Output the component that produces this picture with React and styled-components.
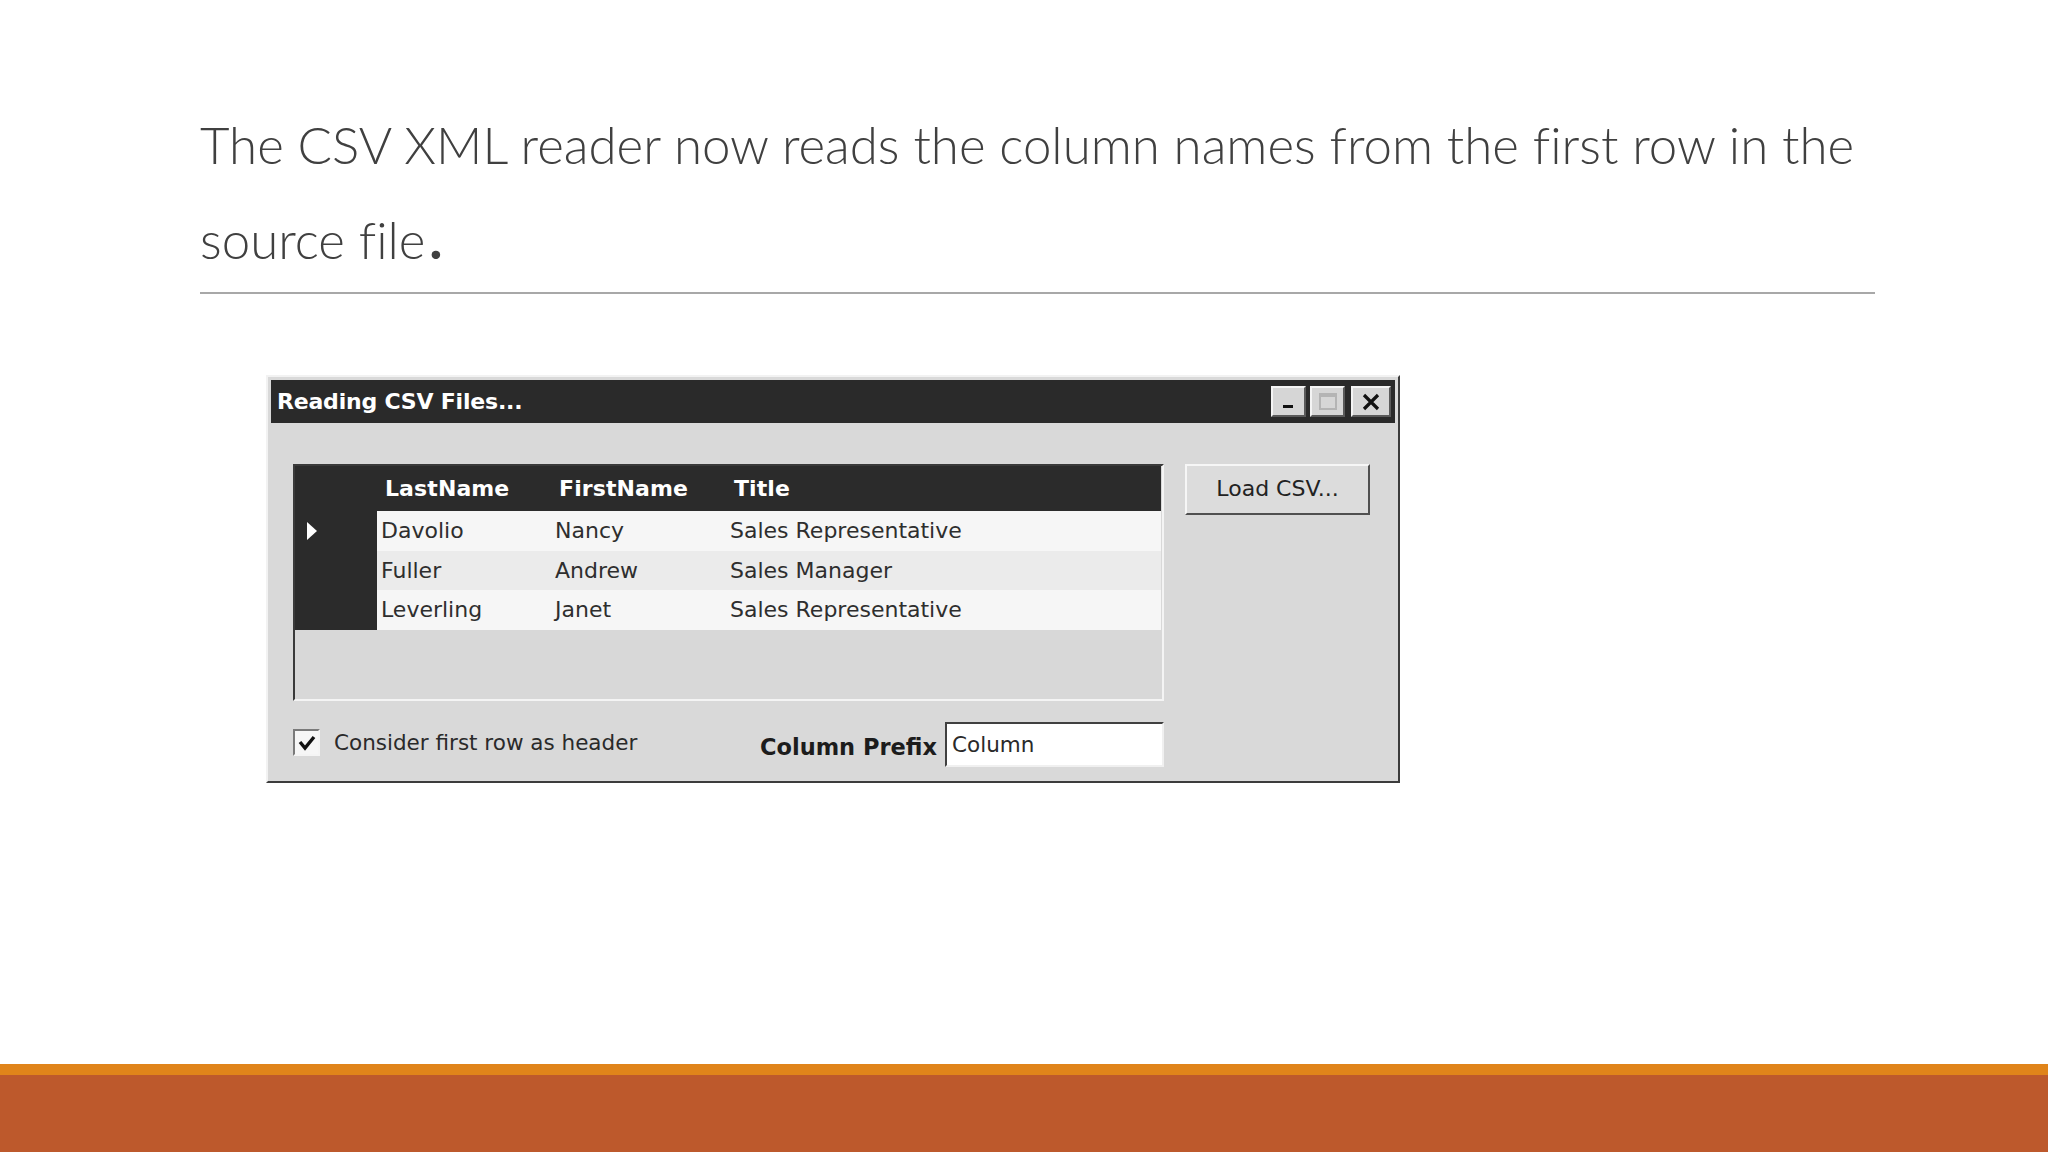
import React from "react";
import styled, { createGlobalStyle } from "styled-components";

const GlobalStyle = createGlobalStyle`
  html, body {
    margin: 0;
    padding: 0;
    background: #ffffff;
  }
  body {
    width: 2048px;
    height: 1152px;
    overflow: hidden;
  }
`;

const Slide = styled.div`
  width: 2048px;
  height: 1152px;
  display: flex;
  flex-direction: column;
  background: #ffffff;
`;

const Content = styled.div`
  flex: 1;
  padding: 98px 0 0 200px;
`;

const Heading = styled.p`
  margin: 0;
  width: 1680px;
  font-family: "Lato", "Open Sans", sans-serif;
  font-weight: 300;
  font-size: 51px;
  line-height: 93px;
  color: #404040;
  font-variant-ligatures: none;
`;

const Dot = styled.span`
  font-weight: 700;
  font-size: 56px;
  margin-left: 4px;
`;

const Rule = styled.hr`
  margin: 6px 0 0 0;
  width: 1675px;
  border: 0;
  height: 2px;
  background: #a8a8a8;
`;

const Footer = styled.div`
  display: flex;
  flex-direction: column;
`;

const Stripe = styled.div`
  height: ${({ $h }) => $h}px;
  background: ${({ $c }) => $c};
`;

/* ---------- classic dialog ---------- */

const Window = styled.div`
  margin: 81px 0 0 66px;
  width: 1134px;
  height: 408px;
  box-sizing: border-box;
  background: #d9d9d9;
  border: 2px solid;
  border-color: #f2f2f2 #3c3c3c #3c3c3c #f2f2f2;
  padding: 3px;
  display: flex;
  flex-direction: column;
  font-family: "DejaVu Sans", "Liberation Sans", sans-serif;
  font-size: 22px;
  color: #262626;
`;

const TitleBar = styled.div`
  height: 43px;
  flex: none;
  background: #2a2a2a;
  display: flex;
  align-items: center;
  padding: 0 4px 0 6px;
`;

const TitleText = styled.div`
  flex: 1;
  color: #ffffff;
  font-weight: 700;
  font-size: 22px;
  letter-spacing: -0.2px;
`;

const TitleButtons = styled.div`
  display: flex;
  gap: 4px;
`;

const CaptionButton = styled.div`
  width: ${({ $wide }) => ($wide ? 40 : 35)}px;
  height: 31px;
  box-sizing: border-box;
  background: #d6d6d6;
  border: 2px solid;
  border-color: #f4f4f4 #5a5a5a #5a5a5a #f4f4f4;
  display: flex;
  align-items: center;
  justify-content: center;
  margin-left: ${({ $gap }) => $gap || 0}px;
`;

const Body = styled.div`
  flex: 1;
  display: grid;
  grid-template-columns: 871px 185px;
  column-gap: 21px;
  padding: 41px 25px 0 22px;
`;

const LeftColumn = styled.div`
  display: flex;
  flex-direction: column;
`;

const Grid = styled.div`
  height: 237px;
  box-sizing: border-box;
  background: #d8d8d8;
  border: 2px solid;
  border-color: #3a3a3a #f4f4f4 #f4f4f4 #3a3a3a;
  display: flex;
  flex-direction: column;
`;

const Row = styled.div`
  display: grid;
  grid-template-columns: 82px 174px 175px 1fr;
  height: ${({ $header }) => ($header ? 45 : 39.5)}px;
  background: ${({ $header, $shade }) =>
    $header ? "#2b2b2b" : $shade ? "#ebebeb" : "#f6f6f6"};
  margin-right: 1px;
`;

const RowHead = styled.div`
  background: #2b2b2b;
  display: flex;
  align-items: center;
  padding-left: 12px;
`;

const Cell = styled.div`
  display: flex;
  align-items: center;
  padding-left: ${({ $header }) => ($header ? 8 : 4)}px;
  color: ${({ $header }) => ($header ? "#ffffff" : "#2e2e2e")};
  font-weight: ${({ $header }) => ($header ? 700 : 400)};
  letter-spacing: ${({ $header }) => ($header ? "0.1px" : "0")};
  white-space: nowrap;
`;

const Triangle = styled.div`
  width: 0;
  height: 0;
  border-top: 9px solid transparent;
  border-bottom: 9px solid transparent;
  border-left: 10px solid #ffffff;
`;

const BottomRow = styled.div`
  margin-top: 21px;
  height: 45px;
  display: flex;
  align-items: center;
`;

const CheckLabel = styled.label`
  display: flex;
  align-items: center;
  gap: 14px;
  flex: 1;
  color: #2a2a2a;
  font-size: 21.5px;
  padding-bottom: 4px;
`;

const CheckBox = styled.span`
  width: 27px;
  height: 27px;
  box-sizing: border-box;
  background: #f6f6f6;
  border: 2px solid;
  border-color: #7a7a7a #f4f4f4 #f4f4f4 #7a7a7a;
  display: flex;
  align-items: center;
  justify-content: center;
`;

const PrefixLabel = styled.span`
  font-weight: 700;
  font-size: 22.5px;
  color: #1c1c1c;
  margin-right: 8px;
  padding-top: 4px;
`;

const TextBox = styled.div`
  width: 219px;
  height: 45px;
  box-sizing: border-box;
  background: #ffffff;
  border: 2px solid;
  border-color: #404040 #f0f0f0 #f0f0f0 #404040;
  display: flex;
  align-items: center;
  padding-left: 5px;
  color: #2a2a2a;
  font-size: 21.5px;
`;

const LoadButton = styled.button`
  width: 185px;
  height: 51px;
  box-sizing: border-box;
  background: #dcdcdc;
  border: 2px solid;
  border-color: #f6f6f6 #505050 #505050 #f6f6f6;
  font-family: "DejaVu Sans", "Liberation Sans", sans-serif;
  font-size: 22px;
  color: #222222;
  padding: 0 0 2px 0;
`;

const rows = [
  { last: "Davolio", first: "Nancy", title: "Sales Representative", current: true },
  { last: "Fuller", first: "Andrew", title: "Sales Manager" },
  { last: "Leverling", first: "Janet", title: "Sales Representative" },
];

const DataGrid = () => (
  <Grid>
    <Row $header>
      <RowHead />
      <Cell $header>LastName</Cell>
      <Cell $header>FirstName</Cell>
      <Cell $header>Title</Cell>
    </Row>
    {rows.map((r, i) => (
      <Row key={r.last} $shade={i % 2 === 1}>
        <RowHead>{r.current && <Triangle />}</RowHead>
        <Cell>{r.last}</Cell>
        <Cell>{r.first}</Cell>
        <Cell>{r.title}</Cell>
      </Row>
    ))}
  </Grid>
);

const CsvDialog = () => (
  <Window>
    <TitleBar>
      <TitleText>Reading CSV Files...</TitleText>
      <TitleButtons>
        <CaptionButton>
          <svg width="16" height="16" viewBox="0 0 16 16">
            <rect x="2" y="11" width="10" height="3" fill="#111" />
          </svg>
        </CaptionButton>
        <CaptionButton>
          <svg width="22" height="20" viewBox="0 0 22 20">
            <rect x="3" y="2" width="16" height="15" fill="none" stroke="#b4b4b4" strokeWidth="2" />
            <rect x="3" y="2" width="16" height="3" fill="#b4b4b4" />
          </svg>
        </CaptionButton>
        <CaptionButton $wide $gap={2}>
          <svg width="20" height="18" viewBox="0 0 20 18">
            <path d="M3 2 L17 16 M17 2 L3 16" stroke="#111" strokeWidth="3.2" />
          </svg>
        </CaptionButton>
      </TitleButtons>
    </TitleBar>
    <Body>
      <LeftColumn>
        <DataGrid />
        <BottomRow>
          <CheckLabel>
            <CheckBox>
              <svg width="18" height="16" viewBox="0 0 18 16">
                <path d="M2 7 L7 13 L16 2" fill="none" stroke="#111" strokeWidth="3.4" />
              </svg>
            </CheckBox>
            Consider first row as header
          </CheckLabel>
          <PrefixLabel>Column Prefix</PrefixLabel>
          <TextBox>Column</TextBox>
        </BottomRow>
      </LeftColumn>
      <div>
        <LoadButton>Load CSV...</LoadButton>
      </div>
    </Body>
  </Window>
);

export default function App() {
  return (
    <>
      <GlobalStyle />
      <Slide>
        <Content>
          <Heading>
            The CSV XML reader now reads the column names from the first row in the
            <br />
            source file<Dot>.</Dot>
          </Heading>
          <Rule />
          <CsvDialog />
        </Content>
        <Footer>
          <Stripe $h={11} $c="#e0841a" />
          <Stripe $h={77} $c="#bd592c" />
        </Footer>
      </Slide>
    </>
  );
}
